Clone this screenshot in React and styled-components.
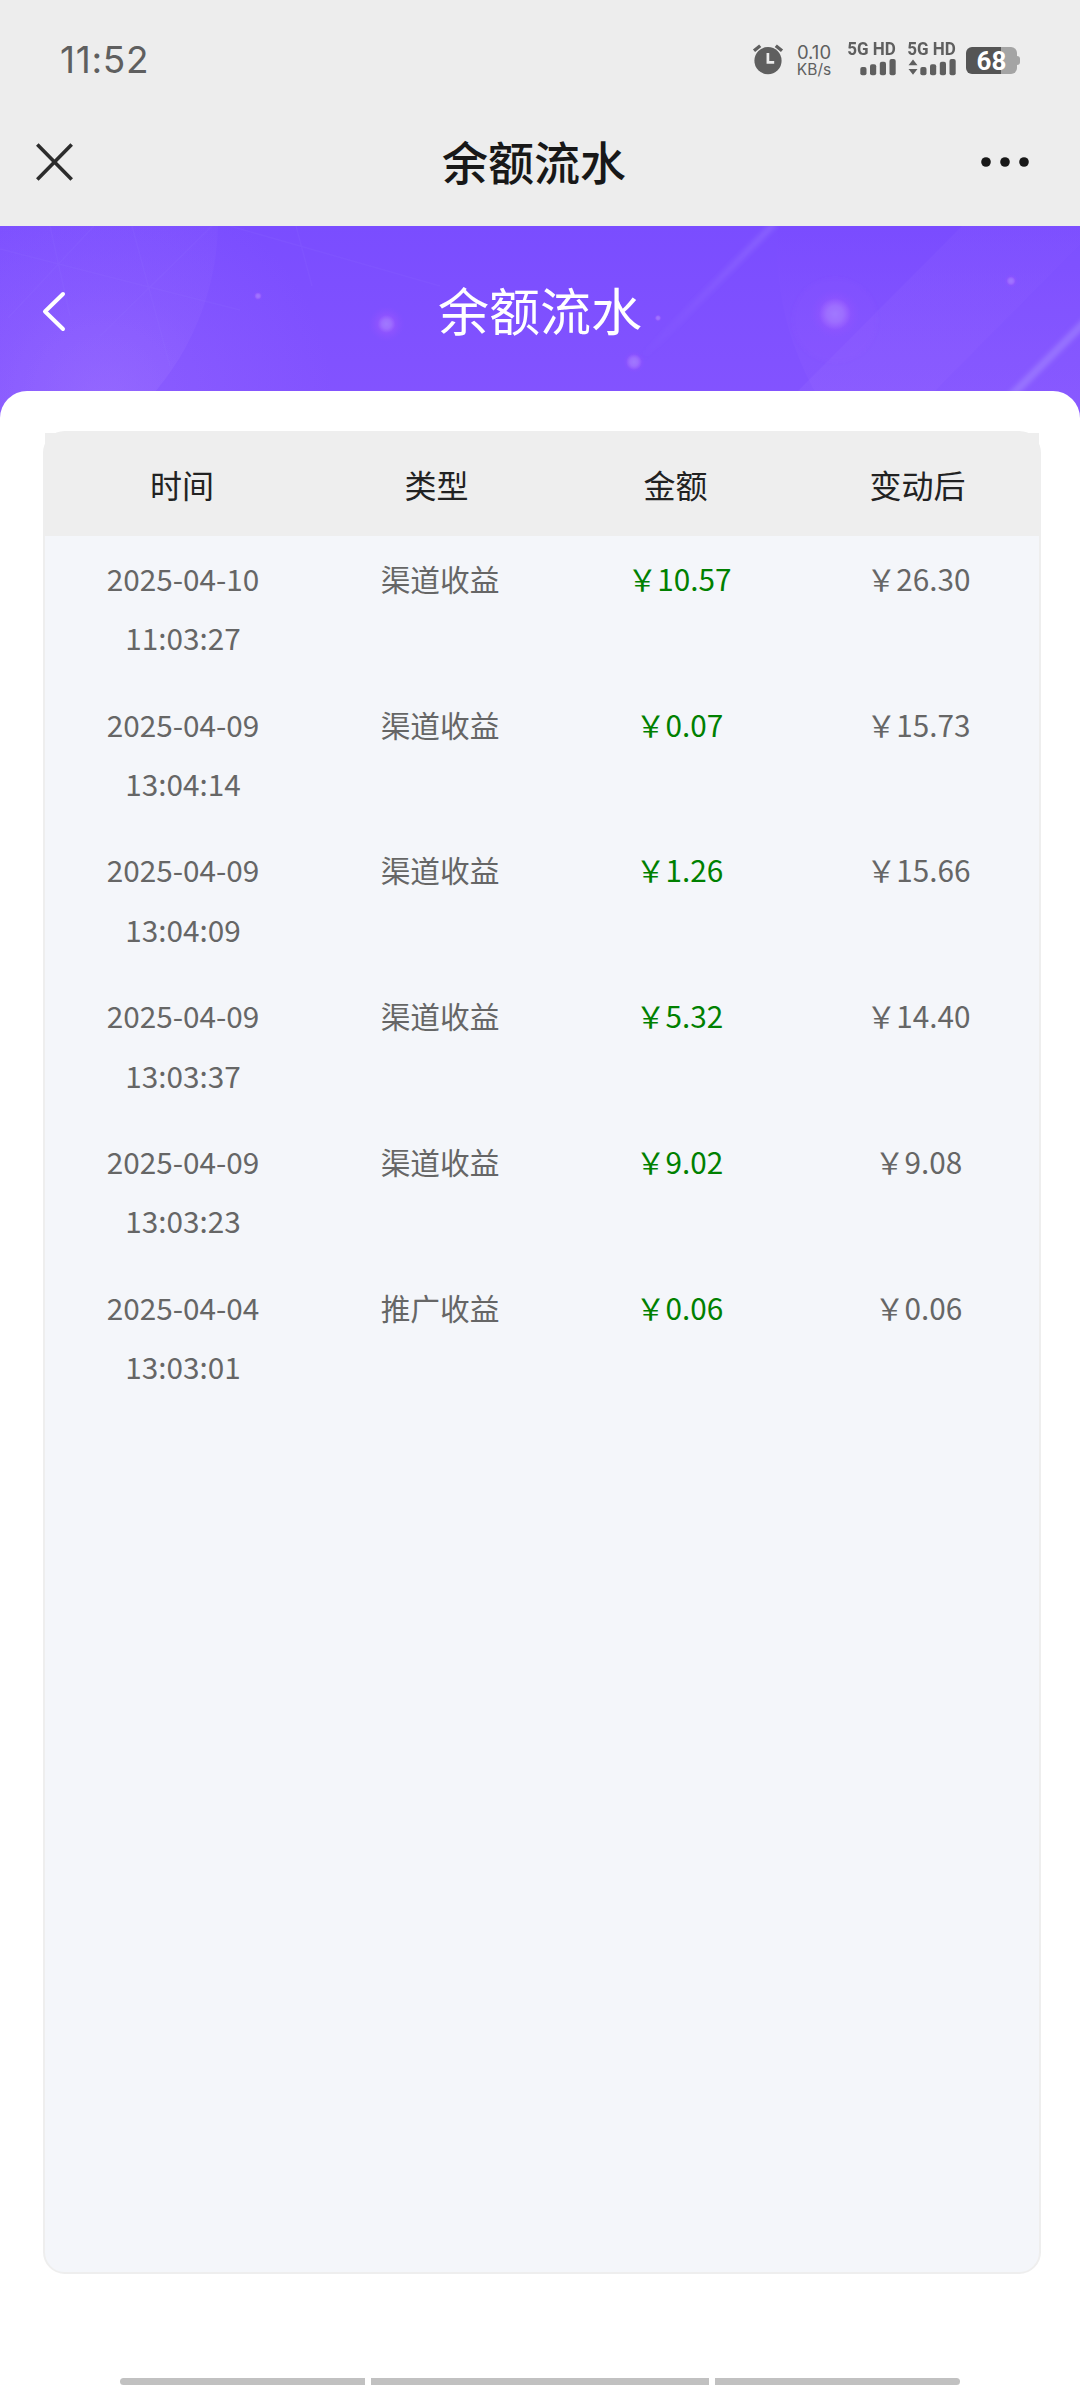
import React from 'react';
import styled, { createGlobalStyle } from 'styled-components';

const GlobalStyle = createGlobalStyle`
  * {
    box-sizing: border-box;
  }

  body {
    margin: 0;
    background: #fff;
    font-family: 'Noto Sans CJK SC', 'Noto Sans', sans-serif;
  }
`;

const Page = styled.div`
  display: flex;
  flex-direction: column;
  width: 1080px;
  height: 2388px;
  overflow: hidden;
  background: #fff;
`;

const StatusBar = styled.div`
  display: flex;
  align-items: flex-start;
  height: 98px;
  padding: 41px 60px 0 60px;
  background: #ededed;
  color: #5f5f5f;
  font-family: Inter, 'Liberation Sans', sans-serif;
`;

const Clock = styled.div`
  flex: 1;
  font-size: 37px;
  line-height: 37px;
  letter-spacing: 0.7px;
`;

const AlarmIcon = styled.svg`
  width: 32px;
  height: 32px;
  margin-top: 3px;
`;

const Speed = styled.div`
  display: flex;
  flex-direction: column;
  width: 36px;
  margin: 2px 15px 0 12px;
  text-align: center;
  font-size: 18.5px;
  line-height: 18px;
`;

const SpeedUnit = styled.span`
  font-size: 15.5px;
  line-height: 17px;
`;

const Sim = styled.div`
  display: flex;
  flex-direction: column;
  align-items: flex-end;
  width: 49px;
  margin-right: 11px;
`;

const SimLabel = styled.span`
  font-family: Roboto, sans-serif;
  font-size: 18.5px;
  font-weight: 700;
  line-height: 17px;
  white-space: nowrap;
  transform: scaleX(0.92);
  transform-origin: right;
`;

const Signal = styled.svg`
  width: 48px;
  height: 18px;
`;

const Battery = styled.div`
  display: flex;
  align-items: center;
  margin: 6px 0 0 -1px;
`;

const BatteryBody = styled.div`
  width: 51px;
  height: 27px;
  border-radius: 6px;
  background: linear-gradient(to right, #555 ${props => props.$level}%, #a4a4a4 ${props => props.$level}%);
  color: #fff;
  font-family: Roboto, sans-serif;
  font-size: 26px;
  font-weight: 700;
  line-height: 28px;
  text-align: center;
`;

const BatteryTip = styled.div`
  width: 3px;
  height: 9px;
  border-radius: 0 3px 3px 0;
  background: #a4a4a4;
`;

const NavBar = styled.div`
  display: flex;
  align-items: center;
  height: 128px;
  padding: 0 50px 1px 35px;
  background: #ededed;
`;

const CloseIcon = styled.svg`
  width: 40px;
  height: 40px;
`;

const NavTitle = styled.div`
  flex: 1;
  padding: 0 0 3px 13px;
  color: #181818;
  font-size: 46px;
  font-weight: 500;
  line-height: 60px;
  text-align: center;
`;

const MoreIcon = styled.svg`
  width: 50px;
  height: 12px;
`;

const Hero = styled.div`
  display: grid;
  height: 192px;
`;

const HeroArt = styled.svg`
  grid-area: 1 / 1;
  width: 1080px;
  height: 192px;
`;

const HeroBar = styled.div`
  grid-area: 1 / 1;
  z-index: 1;
  display: flex;
  align-items: center;
  height: 165px;
  padding: 0 40px;
`;

const BackIcon = styled.svg`
  width: 28px;
  height: 44px;
  margin-top: 5px;
`;

const HeroTitle = styled.h1`
  flex: 1;
  margin: 0 28px 0 0;
  color: #fff;
  font-size: 51px;
  font-weight: 400;
  line-height: 70px;
  text-align: center;
`;

const Sheet = styled.div`
  z-index: 2;
  display: flex;
  flex-direction: column;
  flex: 1;
  margin-top: -27px;
  padding: 40px 39px 0 43px;
  border-radius: 27px 27px 0 0;
  background: #fff;
`;

const Table = styled.div`
  height: 1843px;
  border: 2px solid #eee;
  border-radius: 22px;
  background: #f4f6fa;
`;

const TableHead = styled.div`
  display: grid;
  grid-template-columns: 274px 235px 243px 241px;
  height: 103px;
  padding-right: 1px;
  background: #eee;
  color: #222;
  font-size: 32px;
  line-height: 102px;
  text-align: center;
`;

const TableRow = styled.div`
  display: grid;
  grid-template-columns: 276px 238px 241px 237px;
  padding: 12.8px 0 14.2px;
  color: #666;
  font-size: 29.7px;
  line-height: 59.4px;
  text-align: center;
`;

const Cell = styled.div`
  color: ${props => (props.$income ? '#008000' : 'inherit')};
`;

const Time = styled.div`
  width: 160px;
  margin: 0 auto;
`;

const HomeBar = styled.div`
  display: flex;
  gap: 6px;
  margin: auto 81px 3px 77px;
`;

const HomeSegment = styled.div`
  flex: ${props => props.$grow};
  height: 7px;
  border-radius: ${props => props.$radius || '0'};
  background: #c1c1c1;
`;

const records = [
  { date: '2025-04-10', time: '11:03:27', type: '渠道收益', amount: '10.57', after: '26.30' },
  { date: '2025-04-09', time: '13:04:14', type: '渠道收益', amount: '0.07', after: '15.73' },
  { date: '2025-04-09', time: '13:04:09', type: '渠道收益', amount: '1.26', after: '15.66' },
  { date: '2025-04-09', time: '13:03:37', type: '渠道收益', amount: '5.32', after: '14.40' },
  { date: '2025-04-09', time: '13:03:23', type: '渠道收益', amount: '9.02', after: '9.08' },
  { date: '2025-04-04', time: '13:03:01', type: '推广收益', amount: '0.06', after: '0.06' },
];

const glows = [
  { x: 386.5, y: 98, r: 18, core: 9 },
  { x: 835, y: 88, r: 25, core: 16 },
  { x: 634, y: 136, r: 11, core: 8 },
  { x: 658, y: 92, r: 4, core: 3 },
  { x: 258, y: 70, r: 5, core: 3.5 },
  { x: 1011, y: 55, r: 7, core: 4.5 },
];

function SimSignal({ data }) {
  return (
    <Sim>
      <SimLabel>5G HD</SimLabel>
      <Signal viewBox="0 0 48 18" fill="#5f5f5f">
        {data && <path d="M0.5 7.2 5 1.6l4.5 5.6zM0.5 11 5 16.8 9.5 11z" />}
        <rect x="12.3" y="9" width="6.2" height="8.2" rx="2" />
        <rect x="22" y="6.3" width="6.2" height="10.9" rx="2" />
        <rect x="31.8" y="3.8" width="6.2" height="13.4" rx="2" />
        <rect x="41.5" y="0.9" width="6.2" height="16.3" rx="2" />
      </Signal>
    </Sim>
  );
}

function HeroBackground() {
  return (
    <HeroArt viewBox="0 0 1080 192">
      <defs>
        <linearGradient id="base" x1="0" y1="0" x2="0" y2="1">
          <stop offset="0" stopColor="#7a4dff" />
          <stop offset="1" stopColor="#8454ff" />
        </linearGradient>
        <radialGradient id="leftLight" gradientUnits="userSpaceOnUse" cx="105" cy="180" r="230">
          <stop offset="0" stopColor="#a880ff" stopOpacity="0.3" />
          <stop offset="0.5" stopColor="#a880ff" stopOpacity="0.11" />
          <stop offset="1" stopColor="#a880ff" stopOpacity="0.05" />
        </radialGradient>
        <radialGradient id="leftHaze" gradientUnits="userSpaceOnUse" cx="105" cy="180" r="230">
          <stop offset="0" stopColor="#a880ff" stopOpacity="0.22" />
          <stop offset="1" stopColor="#a880ff" stopOpacity="0" />
        </radialGradient>
        <linearGradient id="rightLight" x1="0" y1="0" x2="0" y2="1">
          <stop offset="0.45" stopColor="#7848ff" stopOpacity="0.3" />
          <stop offset="0.8" stopColor="#9868ff" stopOpacity="0.22" />
        </linearGradient>
        <linearGradient id="band" x1="0" y1="0" x2="0" y2="1">
          <stop offset="0" stopColor="#9a70ff" stopOpacity="0.1" />
          <stop offset="1" stopColor="#9a70ff" stopOpacity="0.2" />
        </linearGradient>
        <linearGradient id="streak" gradientUnits="userSpaceOnUse" x1="772" y1="0" x2="640" y2="134">
          <stop offset="0" stopColor="#a080ff" stopOpacity="0.34" />
          <stop offset="1" stopColor="#a080ff" stopOpacity="0" />
        </linearGradient>
        <radialGradient id="glow">
          <stop offset="0" stopColor="#a860ff" stopOpacity="0.7" />
          <stop offset="0.5" stopColor="#a058ff" stopOpacity="0.4" />
          <stop offset="1" stopColor="#9050ff" stopOpacity="0" />
        </radialGradient>
        <radialGradient id="core">
          <stop offset="0" stopColor="#a078ff" />
          <stop offset="0.5" stopColor="#9f74ff" stopOpacity="0.8" />
          <stop offset="1" stopColor="#a070ff" stopOpacity="0" />
        </radialGradient>
        <filter id="soft">
          <feGaussianBlur stdDeviation="2" />
        </filter>
      </defs>
      <rect width="1080" height="192" fill="url(#base)" />
      <rect width="400" height="192" fill="url(#leftHaze)" />
      <circle cx="-48" cy="-6" r="266" fill="url(#leftLight)" />
      <g stroke="#a080ff" strokeOpacity="0.1" strokeWidth="1.5" fill="none">
        <path d="M0 23 145 60 240 84M230 0 440 60M94 0 8 92M212 0 100 110M50 0 70 90M132 0 170 140M296 0 312 60" />
      </g>
      <circle cx="1075" cy="20" r="298" fill="url(#rightLight)" />
      <path d="M962 0H1080V19L935 165H798z" fill="url(#band)" />
      <path d="M1080 19V192H908z" fill="#9268ff" fillOpacity="0.1" />
      <path d="M774-2 640 134" stroke="url(#streak)" strokeWidth="7" filter="url(#soft)" />
      <path d="M1090 91 1000 181" stroke="#a283ff" strokeOpacity="0.6" strokeWidth="8" filter="url(#soft)" />
      <circle cx="835" cy="94" r="42" fill="#9555ff" fillOpacity="0.12" filter="url(#soft)" />
      {glows.map(g => (
        <g key={g.x}>
          <circle cx={g.x} cy={g.y} r={g.r} fill="url(#glow)" />
          <circle cx={g.x} cy={g.y} r={g.core} fill="url(#core)" />
        </g>
      ))}
    </HeroArt>
  );
}

class App extends React.Component {
  render() {
    return (
      <Page>
        <GlobalStyle />
        <StatusBar>
          <Clock>11:52</Clock>
          <AlarmIcon viewBox="0 0 32 32" fill="none" stroke="#5f5f5f">
            <circle cx="16" cy="16.7" r="13.6" fill="#5f5f5f" stroke="none" />
            <path d="M2 6.8 8.2 1.8M30 6.8 23.8 1.8" strokeWidth="3.4" />
            <path d="M15.9 9v9.3h6.3" stroke="#ededed" strokeWidth="2.7" />
          </AlarmIcon>
          <Speed>
            0.10
            <SpeedUnit>KB/s</SpeedUnit>
          </Speed>
          <SimSignal />
          <SimSignal data />
          <Battery>
            <BatteryBody $level={68}>68</BatteryBody>
            <BatteryTip />
          </Battery>
        </StatusBar>
        <NavBar>
          <CloseIcon viewBox="0 0 40 40" fill="none" stroke="#2c2c2c" strokeWidth="3.6">
            <path d="M2.3 2.6 36.7 37.4M36.7 2.6 2.3 37.4" />
          </CloseIcon>
          <NavTitle>余额流水</NavTitle>
          <MoreIcon viewBox="0 0 50 12" fill="#181818">
            <circle cx="6" cy="6" r="4.8" />
            <circle cx="25" cy="6" r="4.8" />
            <circle cx="44" cy="6" r="4.8" />
          </MoreIcon>
        </NavBar>
        <Hero>
          <HeroBackground />
          <HeroBar>
            <BackIcon viewBox="0 0 28 44" fill="none" stroke="#fff" strokeWidth="4" strokeLinecap="round" strokeLinejoin="round">
              <path d="M23 5 5 22.5 23 40" />
            </BackIcon>
            <HeroTitle>余额流水</HeroTitle>
          </HeroBar>
        </Hero>
        <Sheet>
          <Table>
            <TableHead>
              <div>时间</div>
              <div>类型</div>
              <div>金额</div>
              <div>变动后</div>
            </TableHead>
            {records.map(r => (
              <TableRow key={r.date + r.time}>
                <Cell>
                  <Time>{r.date} {r.time}</Time>
                </Cell>
                <Cell>{r.type}</Cell>
                <Cell $income>￥{r.amount}</Cell>
                <Cell>￥{r.after}</Cell>
              </TableRow>
            ))}
          </Table>
          <HomeBar>
            <HomeSegment $grow="245" $radius="4px 0 0 4px" />
            <HomeSegment $grow="338" />
            <HomeSegment $grow="245" $radius="0 4px 4px 0" />
          </HomeBar>
        </Sheet>
      </Page>
    );
  }
}

export default App;
